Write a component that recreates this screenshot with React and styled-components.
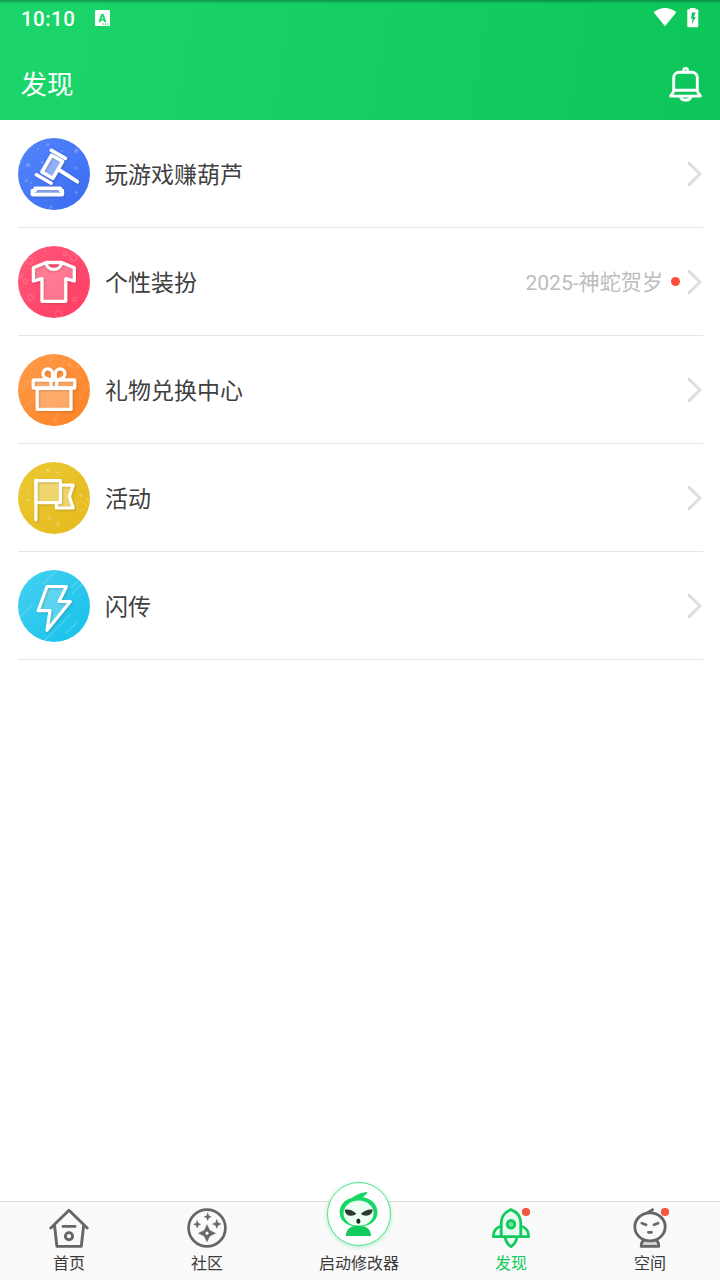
import React from 'react';
import styled, { createGlobalStyle } from 'styled-components';

const GlobalStyle = createGlobalStyle`
  * { box-sizing: border-box; }
  body { margin: 0; background: #fff; font-family: Roboto, "Noto Sans CJK SC", sans-serif; }
`;

const Screen = styled.div`
  width: 720px;
  height: 1280px;
  display: flex;
  flex-direction: column;
  background: #fff;
  overflow: hidden;
`;

const Header = styled.header`
  height: 120px;
  flex: none;
  color: #fff;
  background:
    linear-gradient(180deg, rgba(0, 60, 30, 0.4) 0, rgba(0, 60, 30, 0.2) 2px, rgba(0, 60, 30, 0) 4px),
    linear-gradient(100deg, #1cd66b 0%, #0dc65a 100%);
`;

const StatusBar = styled.div`
  height: 36px;
  padding: 0 21px;
  display: flex;
  align-items: center;
`;

const Clock = styled.span`
  font-size: 20.5px;
  font-weight: 500;
  letter-spacing: 0.45px;
  line-height: 24px;
  padding-top: 1px;
  width: 74px;
`;

const StatusIcons = styled.div`
  margin-left: auto;
  display: flex;
  gap: 10px;
`;

const TitleBar = styled.div`
  height: 84px;
  padding: 12px 17px 0 20.5px;
  display: flex;
  align-items: center;
  justify-content: space-between;
`;

const Title = styled.h1`
  margin: 0;
  padding-top: 2px;
  font-size: 26.5px;
  line-height: 40px;
  font-weight: 400;
`;

const Icon = styled.svg`
  display: block;
  flex: none;
  width: ${(p) => p.$w}px;
  height: ${(p) => p.$h || p.$w}px;
  fill: none;
  stroke-linecap: round;
  stroke-linejoin: round;
`;

const List = styled.main`
  flex: 1;
  padding: 0 17px 0 18px;
`;

const Row = styled.div`
  height: 108px;
  padding-right: 1px;
  border-bottom: 1px solid #e6e6e6;
  display: flex;
  align-items: center;
`;

const Badge = styled.div`
  width: 72px;
  height: 72px;
  border-radius: 50%;
  overflow: hidden;
  background: linear-gradient(135deg, ${(p) => p.$from}, ${(p) => p.$to});
`;

const RowLabel = styled.span`
  margin-left: 15px;
  padding-top: 4px;
  font-size: 23px;
  line-height: 34px;
  color: #404040;
`;

const RowEnd = styled.div`
  margin-left: auto;
  display: flex;
  align-items: center;
`;

const Note = styled.span`
  padding-top: 2px;
  font-size: 21.1px;
  line-height: 30px;
  color: #bdbdbd;
`;

const NoteDot = styled.i`
  width: 9px;
  height: 9px;
  margin: 0 7px 0 8px;
  border-radius: 50%;
  background: #ff4d3a;
`;

const TabBar = styled.nav`
  height: 79px;
  flex: none;
  border-top: 1px solid #dedede;
  background: #fafafa;
  display: grid;
  grid-template-columns: 138px 138px 166px 138px 1fr;
`;

const Tab = styled.div`
  display: flex;
  flex-direction: column;
  align-items: center;
  padding-top: 6px;
  color: ${(p) => (p.$active ? '#12ca5e' : '#3a3a3a')};
`;

const TabLabel = styled.span`
  font-size: 16px;
  line-height: 24px;
  margin-top: 4px;
`;

const LaunchButton = styled.div`
  width: 64px;
  height: 64px;
  margin: -26px 1px 2px 0;
  border-radius: 50%;
  border: 1.5px solid #4fe38c;
  background: #fff;
  box-shadow: 0 1px 4px rgba(40, 210, 110, 0.35);
  display: flex;
  align-items: center;
  justify-content: center;
`;

const Strokes = styled.g`
  stroke: #fff;
  stroke-width: ${(p) => p.$width || 3.6};
  filter: drop-shadow(1px 1px 1px rgba(60, 30, 0, 0.2));
`;

function Bubbles({ items, ring }) {
  return items.map(([x, y, r]) => (
    <circle
      key={`${x}-${y}`}
      cx={x}
      cy={y}
      r={r}
      fill={ring ? 'none' : '#fff'}
      stroke={ring ? '#fff' : 'none'}
      strokeWidth="1.3"
      opacity={ring ? 0.14 : 0.2}
    />
  ));
}

const Gavel = () => (
  <Icon $w={72} viewBox="0 0 72 72">
    <Bubbles items={[[10, 27, 2.3], [30, 6.5, 1.6], [58.5, 12.7, 2.3], [57.5, 30, 1.6], [8.3, 42.7, 1.6], [24.3, 24, 1.6], [58.3, 54.5, 1.6], [33, 69, 1.6], [20, 11, 1], [44, 13, 1], [13, 45, 0.9]]} />
    <path d="M33.6 17.2 44.6 23.4 34.8 40.3 23.9 34ZM17 50H43V56H17Z" fill="#fff" opacity=".4" />
    <Strokes>
      <path d="M33.6 17.2 44.6 23.4 34.8 40.3 23.9 34Z" />
      <path d="M33.3 12.3 47.4 20.4M18.5 36.8 33.2 45.2" />
      <path d="M40.5 31.7 59.4 43.8M42 32.3 59 43.2" />
      <path d="M14.4 56.6V52.6H17.2V50.3H42.4V52.6H44.4V56.6Z" />
    </Strokes>
  </Icon>
);

const Shirt = () => (
  <Icon $w={72} viewBox="0 0 72 72">
    <Bubbles ring items={[[11.5, 15, 3.4], [47.3, 7.6, 2], [55.5, 11.5, 3.4], [7.6, 35.5, 2.2], [12.8, 51.7, 2.8], [57, 53.3, 2], [40.5, 68, 3.3], [2.5, 30, 1.8]]} />
    <path d="M28 16.3 15.4 21.5V34.8L24 32.4V55.1H47.8V32.4L56.3 34.8V21.5L43.7 16.3C42.4 25.6 29.3 25.6 28 16.3Z" fill="#fff" opacity=".26" />
    <Strokes $width={3.3}>
      <path d="M28 16.5 15.4 21.7V35L24 32.6V55.3H47.8V32.6L56.3 35V21.7L43.7 16.5C42.4 25.8 29.3 25.8 28 16.5ZH43.7" />
    </Strokes>
  </Icon>
);

const Gift = () => (
  <Icon $w={72} viewBox="0 0 72 72">
    <g stroke="#fff" opacity=".14" strokeWidth="1.1">
      <path d="M31 8 36 2M43 11 47 6M7 53 19 39M36 66 46 53M62 45 71 32M5 36 12 27" />
      <path d="M51 8 54 12 50 12ZM58 14 62 11M60 24 63 23M7 27 10 29M36 64 39 66 35 68Z" fill="#fff" />
    </g>
    <path d="M15.4 26.2H56.8V33.8H53V55.4H19.2V33.8H15.4Z" fill="#fff" opacity=".25" />
    <Strokes $width={3.3}>
      <path d="M19.2 34.3H53V55.4H19.2Z" />
      <rect x="15.2" y="26" width="41.6" height="8" rx=".6" />
      <path d="M33 26V33M38.8 26V33" />
      <path d="M34.6 25.5V20A4.8 4.8 0 1 0 28.6 24.4L32 25.8M37.4 25.5V20A4.8 4.8 0 1 1 43.4 24.4L40.2 25.8" />
    </Strokes>
  </Icon>
);

const Flag = () => (
  <Icon $w={72} viewBox="0 0 72 72">
    <g stroke="#fff" opacity=".25" strokeWidth="1.5">
      <path d="M30 6.5V10M28.2 8.2H31.8M39.7 9.5V11.5M38.7 10.5H40.7M62.8 32.5V34.5M61.8 33.5H63.8M10.3 37V39.6M9 38.3H11.6M31.5 55V57.4M30.3 56.2H32.7M39.7 60.2V64.2M37.7 62.2H41.7M69.8 36.5V38.3" />
      <circle cx="6.5" cy="30.3" r="4.4" strokeDasharray="0.1 3.35" />
      <circle cx="63" cy="44.3" r="4.4" strokeDasharray="0.1 3.35" />
    </g>
    <path d="M18.2 18.6H42.6V23H55.2L51.7 34.2 55.2 45.8H38.6V40.6H18.2Z" fill="#fff" opacity=".32" />
    <Strokes $width={3.2}>
      <path d="M42.8 23.2H55.2L51.4 34.4 55.2 46H38.4V41.5" />
      <path d="M17.9 18.7H42.4V40.6H17.9Z" />
      <path d="M17.9 18.2V58" />
    </Strokes>
  </Icon>
);

const Bolt = () => (
  <Icon $w={72} viewBox="0 0 72 72">
    <path d="M25 14 37 2M54 17 62 9M54 24 69 9M2 47 14 36M26 71 52 45M48 63 60 51" stroke="#fff" strokeWidth="1.3" opacity=".18" />
    <path d="M29.3 16.4H48.6L41.3 31.4H52.8L29.3 60.4 32.2 40.6H20.4Z" fill="#fff" opacity=".22" />
    <Strokes $width={3.2}>
      <path d="M29 16.5H48.4L41.1 31.5H52.4L29 60.2 32 40.7H20.2Z" />
    </Strokes>
  </Icon>
);

const Bell = () => (
  <Icon $w={36} viewBox="0 0 36 36" stroke="#fff" strokeWidth="2.9">
    <path d="M6.7 24.3V11.6A5.4 5.4 0 0 1 12.1 6.2H24.9A5.4 5.4 0 0 1 30.3 11.6V24.3ZM6.7 24.3C6.4 27 4.8 28.2 3.6 30.1H33.5C32 28.2 30.6 27 30.3 24.3" />
    <circle cx="18.6" cy="4.3" r="2.1" strokeWidth="2.5" />
    <path d="M13.5 31C14.6 35.2 22.6 35.2 23.8 31" />
  </Icon>
);

const KeyboardIcon = () => (
  <Icon $w={15} $h={16} viewBox="0 0 15 16">
    <path fillRule="evenodd" fill="#fff" d="M1.2 0H13.8Q15 0 15 1.2V14.8Q15 16 13.8 16H1.2Q0 16 0 14.8V1.2Q0 0 1.2 0ZM6.2 4 3.4 12H5.5L6 10.5H8.8L9.3 12H11.4L8.6 4ZM6.6 8.8 7.4 6.2 8.2 8.8ZM7.7 13.6V14.7H8.8V13.6ZM9.8 13.6V14.7H10.9V13.6ZM11.9 13.6V14.7H13V13.6Z" />
  </Icon>
);

const Wifi = () => (
  <Icon $w={24} $h={20} viewBox="0 0 24 20">
    <path d="M.8 4Q12-4 23.2 4Q22.8 5 22 6L12 18.2 2 6Q1 5 .8 4Z" fill="#fff" />
  </Icon>
);

const Battery = () => (
  <Icon $w={12} $h={20} viewBox="0 0 12 20">
    <path fillRule="evenodd" fill="#fff" d="M3 0H8.4V1.3H10.4Q11.3 1.3 11.3 2.3V18.3Q11.3 19.3 10.3 19.3H1.3Q.3 19.3 .3 18.3V2.3Q.3 1.3 1.3 1.3H3ZM5 4.4 3.9 10.8H5.7L4.6 16.8 8.8 9H6.9L8.6 4.4Z" />
  </Icon>
);

const Chevron = () => (
  <Icon $w={15} $h={26} viewBox="0 0 15 26">
    <path d="M2 2.2 13 13 2 23.8" stroke="#dcdcdc" strokeWidth="2.9" />
  </Icon>
);

const AlertDot = () => <circle cx="35" cy="4" r="4.1" fill="#f4563f" stroke="none" />;

const Home = () => (
  <Icon $w={40} viewBox="0 0 40 40" stroke="#666" strokeWidth="2.9">
    <path d="M1.8 20 20 2.3 38.2 20M5.6 17.8 7.9 38.4H32.3L34.6 17.8M14 18.4H26" />
    <circle cx="20" cy="28.2" r="3.6" />
  </Icon>
);

const Community = () => (
  <Icon $w={40} viewBox="0 0 40 40">
    <circle cx="20" cy="20" r="18.4" stroke="#666" strokeWidth="2.7" />
    <g fill="#666" stroke="#666" strokeWidth=".5">
      <path d="M20.7 5.1 21.7 7.8 24.2 8.8 21.7 9.8 20.7 12.5 19.7 9.8 17.2 8.8 19.7 7.8ZM10.2 12.7 11.2 15.3 13.7 16.3 11.2 17.3 10.2 19.9 9.2 17.3 6.7 16.3 9.2 15.3ZM29.8 11.8 31 14.8 34 16 31 17.2 29.8 20.2 28.6 17.2 25.6 16 28.6 14.8Z" />
      <path fillRule="evenodd" d="M20 16.9 22.8 22.5 28.5 25.3 22.8 28.1 20 33.7 17.2 28.1 11.5 25.3 17.2 22.5ZM20 23.1 17.8 25.3 20 27.5 22.2 25.3Z" />
    </g>
  </Icon>
);

const Mascot = () => (
  <Icon $w={64} viewBox="0 0 64 64">
    <path d="M24 16.3C29 13 34 10.4 39.5 10.1 40.5 10.1 40.7 11 39.9 11.5L36 15.2C45 16.6 50.5 22.8 50.5 30.5 50.5 39.3 42.2 44.7 31.5 44.7S12.6 39.2 12.6 30.5C12.6 23.8 17 18.1 24 16.3Z" fill="#17d765" />
    <ellipse cx="31.6" cy="31.2" rx="15" ry="12.8" fill="#edfdf4" />
    <path d="M18.8 54C19 47 24 43.6 31.4 43.6S43.8 47 44 54Z" fill="#13cb5c" />
    <path d="M17.8 28C21 26.8 26 28.4 29.3 31.8 27 34.6 18.4 35.4 17.8 28ZM45.6 27.8C42.4 26.8 37.2 28.4 34 31.8 36.3 34.6 45 35.2 45.6 27.8Z" fill="#303633" />
    <ellipse cx="31.4" cy="39.2" rx="2" ry="2.6" fill="#262626" />
  </Icon>
);

const Rocket = () => (
  <Icon $w={40} viewBox="0 0 40 40" stroke="#12ca5e" strokeWidth="2.8">
    <path d="M10.2 18C5.5 19.3 2.3 22.5 2.3 28.7H37.7C37.7 22.5 34.5 19.3 29.8 18M14.2 30C15 34 17.5 37 20 38.7 22.5 37 25 34 25.8 30" fill="#e9fbf1" />
    <path d="M10.2 28.7V15C10.2 9 14 4 20 1.6 26 4 29.8 9 29.8 15V28.7Z" fill="#e9fbf1" />
    <circle cx="20" cy="16.3" r="3.8" fill="#70e29e" />
    <AlertDot />
  </Icon>
);

const Space = () => (
  <Icon $w={40} viewBox="0 0 40 40" stroke="#666" strokeWidth="2.8">
    <path d="M11.2 38.4C11.2 34.8 12.4 33 14 32.2H26C27.8 33 28.8 34.8 28.8 38.4Z" fill="#d2d2d2" />
    <path d="M22.6 1.7 17.6 4.7" />
    <ellipse cx="20" cy="18.8" rx="15.2" ry="14" fill="#fafafa" />
    <path d="M11.9 15.3 16 16.7M28.1 15.3 24 16.7M18.5 24.3H21.5" />
    <AlertDot />
  </Icon>
);

const rows = [
  { label: '玩游戏赚葫芦', art: Gavel, from: '#5486fb', to: '#3a6bf3' },
  { label: '个性装扮', art: Shirt, from: '#ff587a', to: '#ff3d62', note: '2025-神蛇贺岁' },
  { label: '礼物兑换中心', art: Gift, from: '#ff9c4a', to: '#fd8225' },
  { label: '活动', art: Flag, from: '#eac833', to: '#e5bb1d' },
  { label: '闪传', art: Bolt, from: '#45d1f2', to: '#15c0e9' },
];

const tabs = [
  { label: '首页', art: Home },
  { label: '社区', art: Community },
  { label: '启动修改器', art: Mascot, launch: true },
  { label: '发现', art: Rocket, active: true },
  { label: '空间', art: Space },
];

export default function App() {
  return (
    <Screen>
      <GlobalStyle />
      <Header>
        <StatusBar>
          <Clock>10:10</Clock>
          <KeyboardIcon />
          <StatusIcons>
            <Wifi />
            <Battery />
          </StatusIcons>
        </StatusBar>
        <TitleBar>
          <Title>发现</Title>
          <Bell />
        </TitleBar>
      </Header>
      <List>
        {rows.map(({ label, art: Art, from, to, note }) => (
          <Row key={label}>
            <Badge $from={from} $to={to}><Art /></Badge>
            <RowLabel>{label}</RowLabel>
            <RowEnd>
              {note && <><Note>{note}</Note><NoteDot /></>}
              <Chevron />
            </RowEnd>
          </Row>
        ))}
      </List>
      <TabBar>
        {tabs.map(({ label, art: Art, launch, active }) => (
          <Tab key={label} $active={active}>
            {launch ? <LaunchButton><Art /></LaunchButton> : <Art />}
            <TabLabel>{label}</TabLabel>
          </Tab>
        ))}
      </TabBar>
    </Screen>
  );
}
